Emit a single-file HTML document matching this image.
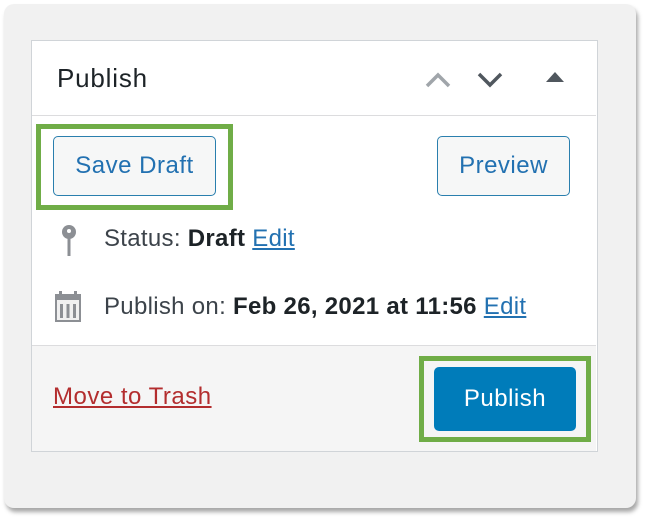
<!DOCTYPE html>
<html><head><style>
body{margin:0;width:646px;height:523px;background:#fff;font-family:"Liberation Sans",sans-serif;position:relative;overflow:hidden}
.abs{position:absolute}
.card{left:4px;top:4px;width:632px;height:504px;background:#f1f1f1;border-radius:10px;box-shadow:2px 4px 4px rgba(0,0,0,.35)}
.panel{left:31px;top:40px;width:565px;height:410px;background:#fff;border:1px solid #d0d4d8}
.foot{left:32px;top:345px;width:564px;height:105px;background:#f5f5f5;border-top:1px solid #dcdcde}
.hline{left:32px;top:115px;width:564px;height:1px;background:#dcdcde}
.t{font-size:24px;color:#3c434a;white-space:nowrap;letter-spacing:0.3px}
.btn{border:1px solid #2a7fae;border-radius:5px;background:#f6f7f7;color:#2271b1;font-size:24px;display:flex;align-items:center;justify-content:center;box-sizing:border-box;letter-spacing:0.5px}
.green{border:5px solid #70ad47;box-sizing:border-box}
a{color:#2271b1}
</style></head><body>
<div class="abs card"></div>
<div class="abs panel"></div>
<div class="abs hline"></div>
<div class="abs foot"></div>
<div class="abs t" style="left:57px;top:63px;font-size:26px;color:#1d2327;letter-spacing:0.8px">Publish</div>
<svg class="abs" style="left:424px;top:68px" width="145" height="22">
<path d="M3 18 L14 7 L25 18" fill="none" stroke="#a0a5aa" stroke-width="3.5"/>
<path d="M55 6 L66 17 L77 6" fill="none" stroke="#50575e" stroke-width="3.5"/>
<path d="M122 14 L131 4 L140 14Z" fill="#50575e"/>
</svg>
<div class="abs green" style="left:36px;top:124px;width:197px;height:86px"></div>
<div class="abs btn" style="left:53px;top:136px;width:163px;height:60px">Save Draft</div>
<div class="abs btn" style="left:437px;top:136px;width:133px;height:60px">Preview</div>
<svg class="abs" style="left:58px;top:224px" width="22" height="34">
<circle cx="11" cy="8" r="7" fill="#8c8f94"/><circle cx="11" cy="7" r="2" fill="#fff"/>
<rect x="9.5" y="12" width="3" height="20" fill="#8c8f94"/>
</svg>
<div class="abs t" style="left:104px;top:225px">Status: <b style="color:#1d2327">Draft</b> <a href="#">Edit</a></div>
<svg class="abs" style="left:54px;top:290px" width="30" height="34">
<rect x="1" y="4" width="26" height="28" fill="#8c8f94"/>
<rect x="3" y="10" width="22" height="20" fill="#f0f0f0"/>
<rect x="5" y="1" width="3" height="7" fill="#8c8f94"/><rect x="20" y="1" width="3" height="7" fill="#8c8f94"/>
<rect x="6" y="14" width="3" height="14" fill="#8c8f94"/><rect x="12.5" y="14" width="3" height="14" fill="#8c8f94"/><rect x="19" y="14" width="3" height="14" fill="#8c8f94"/>
</svg>
<div class="abs t" style="left:104px;top:293px">Publish on: <b style="color:#1d2327">Feb 26, 2021 at 11:56</b> <a href="#">Edit</a></div>
<div class="abs t" style="left:53px;top:383px;letter-spacing:0.5px"><a href="#" style="color:#b32d2e">Move to Trash</a></div>
<div class="abs green" style="left:419px;top:356px;width:172px;height:86px"></div>
<div class="abs btn" style="left:434px;top:367px;width:142px;height:64px;background:#007cba;border-color:#007cba;color:#fff">Publish</div>
</body></html>
